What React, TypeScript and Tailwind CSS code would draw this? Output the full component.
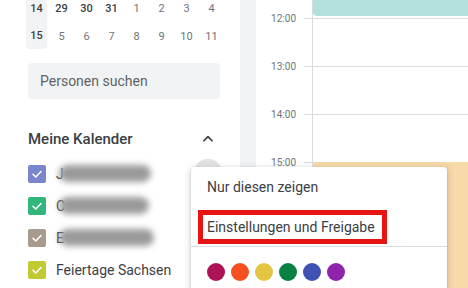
import React from 'react';

const weeks = [
  { wk: '14', days: [{ d: '29', dark: true }, { d: '30', dark: true }, { d: '31', dark: true }, { d: '1' }, { d: '2' }, { d: '3' }, { d: '4' }] },
  { wk: '15', days: [{ d: '5' }, { d: '6' }, { d: '7' }, { d: '8' }, { d: '9' }, { d: '10' }, { d: '11' }] },
];

const calendars = [
  { color: 'bg-[#7986cb]', letter: 'J', blur: 'w-[92px]' },
  { color: 'bg-[#33b679]', letter: 'C', blur: 'w-[90px]' },
  { color: 'bg-[#a79b8e]', letter: 'E', blur: 'w-[95px]' },
];

const dots = ['bg-[#ad1457]', 'bg-[#f4511e]', 'bg-[#e4c441]', 'bg-[#0b8043]', 'bg-[#3f51b5]', 'bg-[#8e24aa]'];

const hours = ['12:00', '13:00', '14:00', '15:00', '16:00'];

function Check() {
  return (
    <svg width="12" height="12" viewBox="0 0 24 24" fill="none" stroke="white" strokeWidth="3.2" strokeLinecap="round" strokeLinejoin="round">
      <polyline points="4 12.5 9.5 18 20 7" />
    </svg>
  );
}

export default function App() {
  return (
    <div className="relative flex h-[288px] w-[468px] overflow-hidden bg-white font-['Roboto',sans-serif]">
      {/* Sidebar */}
      <div className="w-[240px] shrink-0">
        <div className="-mt-[5px] pl-[24px]">
          {weeks.map((w) => (
            <div key={w.wk} className="flex h-[28px] items-center text-[11px]">
              <div className="flex h-full w-[25px] justify-center">
                <div className={`flex w-[21px] items-center justify-center bg-[#f1f3f4] font-medium text-[#3c4043] ${w.wk === '15' ? 'mb-[2px] rounded-b-[3px]' : ''}`}>
                  {w.wk}
                </div>
              </div>
              {w.days.map((d) => (
                <div key={d.d} className={`w-[25px] text-center ${d.dark ? 'font-medium text-[#3c4043]' : 'text-[#70757a]'}`}>
                  {d.d}
                </div>
              ))}
            </div>
          ))}
        </div>

        <div className="ml-[28px] mt-[12px] flex h-[36px] w-[192px] items-center rounded-[4px] bg-[#f1f3f4] pl-[12px] text-[14px] text-[#5f6368]">
          Personen suchen
        </div>

        <div className="ml-[28px] mt-[28px] flex h-[24px] w-[192px] items-center justify-between pr-[5px]">
          <span className="text-[15px] font-medium text-[#3c4043]">Meine Kalender</span>
          <svg width="14" height="14" viewBox="0 0 24 24" fill="none" stroke="#3c4043" strokeWidth="3" strokeLinecap="round" strokeLinejoin="round">
            <polyline points="5 15 12 8 19 15" />
          </svg>
        </div>

        <div className="ml-[28px] mt-[7px] flex flex-col">
          {calendars.map((c) => (
            <div key={c.letter} className="flex h-[32px] items-center">
              <div className={`flex h-[18px] w-[18px] items-center justify-center rounded-[2px] ${c.color}`}>
                <Check />
              </div>
              <div className="relative ml-[10px] flex items-center">
                <span className="text-[14px] text-[#3c4043]">{c.letter}</span>
                <div className={`absolute left-[3px] top-[1px] h-[17px] rounded-full bg-[#9a9a9a] blur-[3px] ${c.blur}`} />
              </div>
            </div>
          ))}
          <div className="flex h-[32px] items-center">
            <div className="flex h-[18px] w-[18px] items-center justify-center rounded-[2px] bg-[#c0ca33]">
              <Check />
            </div>
            <span className="ml-[10px] text-[14px] text-[#3c4043]">Feiertage Sachsen</span>
          </div>
        </div>
      </div>

      {/* Divider strip */}
      <div className="w-[16px] shrink-0 bg-[#f1f3f4]" />

      {/* Day view */}
      <div className="flex flex-1">
        <div className="w-[56px] shrink-0">
          <div className="h-[18px]" />
          {hours.map((h) => (
            <div key={h} className="relative h-[48px]">
              <span className="absolute right-[16px] top-0 -translate-y-1/2 text-[10px] text-[#70757a]">{h}</span>
              <div className="absolute right-0 top-0 w-[8px] border-t border-[#dadce0]" />
            </div>
          ))}
        </div>
        <div className="relative flex-1 border-l border-[#dadce0]">
          <div className="h-[18px]" />
          {hours.map((h) => (
            <div key={h} className="h-[48px] border-t border-[#dadce0]" />
          ))}
          <div className="absolute left-0 right-0 top-0 h-[16px] rounded-bl-[4px] bg-[#b3e0db]" />
          <div className="absolute left-0 right-0 top-[162px] h-[140px] rounded-tl-[4px] bg-[#f8d9a9]" />
        </div>
      </div>

      {/* Hover circle of the options button */}
      <div className="absolute left-[193px] top-[159px] h-[30px] w-[30px] rounded-full bg-[#e3e3e3]" />

      {/* Context menu */}
      <div className="absolute left-[191px] top-[167px] w-[256px] rounded-[4px] bg-white pt-[4px] shadow-[0_2px_6px_2px_rgba(60,64,67,0.15),0_1px_2px_0_rgba(60,64,67,0.3)]">
        <div className="flex h-[32px] items-center pl-[16px] text-[14px] text-[#3c4043]">Nur diesen zeigen</div>
        <div className="ml-[7px] mt-[7px] flex h-[34px] w-[189px] items-center whitespace-nowrap border-[5px] border-[#e81414] pl-[4px] text-[14px] text-[#3c4043]">
          Einstellungen und Freigabe
        </div>
        <div className="mt-[2px] border-t border-[#dadce0]" />
        <div className="flex gap-[6px] pl-[16px] pt-[16px] pb-[12px]">
          {dots.map((d) => (
            <div key={d} className={`h-[18px] w-[18px] rounded-full ${d}`} />
          ))}
        </div>
      </div>
    </div>
  );
}
